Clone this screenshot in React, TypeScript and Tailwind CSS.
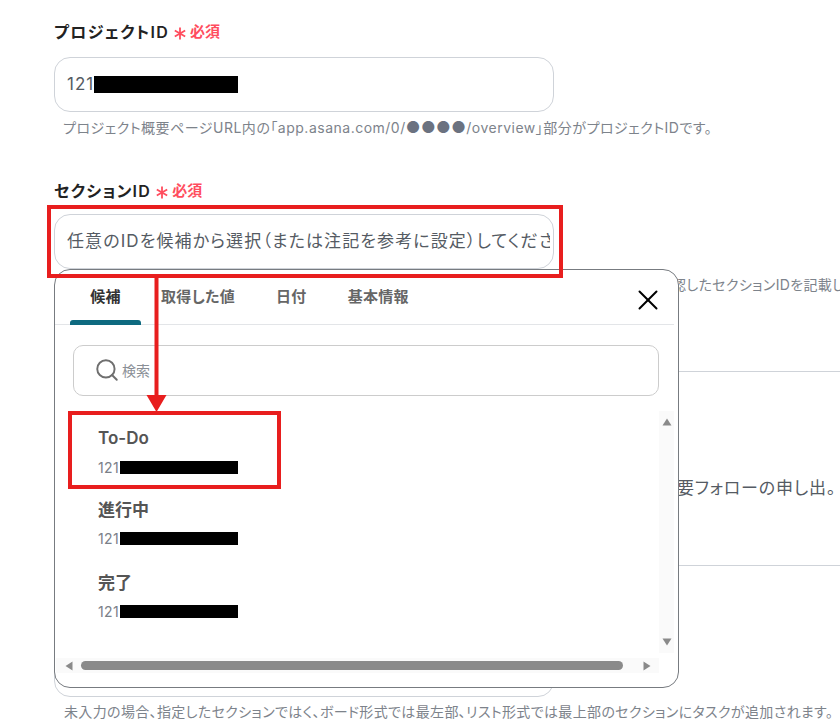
import React from 'react';
import { Search, X } from 'lucide-react';

const FONT = "font-['Inter','Noto_Sans_CJK_JP',sans-serif] [font-feature-settings:'palt']";

const ITEMS = [
  { name: 'To-Do', pt: 'pt-[30px]', idGap: 'mt-[8px]' },
  { name: '進行中', pt: 'pt-[22px]', idGap: 'mt-[7px]' },
  { name: '完了', pt: 'pt-[24px]', idGap: 'mt-[7px]' },
];

function Required() {
  return (
    <span className="ml-[5px] flex items-center text-[15px] font-bold tracking-normal text-[#ff4d5e]">
      <svg className="mr-[4px] mt-[3px]" width="12" height="13" viewBox="0 0 12 13">
        <path d="M6 0.5 V12.5 M0.8 3.5 L11.2 9.5 M11.2 3.5 L0.8 9.5" stroke="#ff4d5e" strokeWidth="1.8" fill="none" />
      </svg>
      必須
    </span>
  );
}

function Redacted({ w, h }: { w: string; h: string }) {
  return <span className={`${w} ${h} inline-block bg-black`} />;
}

function Popover() {
  return (
    <div className="absolute left-[54px] top-[269px] h-[419px] w-[625px] overflow-hidden rounded-[16px] border border-[#777b80] bg-white">
      <div className="relative flex h-[55px] w-[619px] border-b border-[#e3e5e8] pl-[15px] text-[15px] font-semibold tracking-[0.3px] text-[#666]">
        <div className="relative flex h-[54px] w-[71px] items-center justify-center font-bold text-[#333]">
          候補
          <span className="absolute bottom-[-1px] left-0 h-[5px] w-full rounded-t-[3px] bg-[#0e6a80]" />
        </div>
        <div className="ml-[20px] flex h-[54px] items-center">取得した値</div>
        <div className="ml-[41px] flex h-[54px] items-center">日付</div>
        <div className="ml-[41px] flex h-[54px] items-center">基本情報</div>
        <X className="absolute left-[576px] top-[13px] text-black" size={34} strokeWidth={1.4} />
      </div>
      <div className="ml-[18px] mt-[20px] flex h-[51px] w-[586px] items-center rounded-[10px] border border-[#cccccc] pb-[1px] pl-[20px]">
        <Search className="text-[#6f6f6f]" size={26} strokeWidth={1.8} />
        <span className="ml-[2px] text-[14px] text-[#8a8f96]">検索</span>
      </div>
      <div className="flex h-[262px]">
        <div className="w-[604px] pl-[43px]">
          {ITEMS.map((item) => (
            <div key={item.name} className={`${item.pt} flex flex-col`}>
              <span className="h-[24px] text-[17px] font-semibold leading-[24px] text-[#555]">{item.name}</span>
              <span className={`${item.idGap} flex h-[18px] items-center text-[14px] tracking-[0.4px] text-[#7b8088]`}>
                121
                <Redacted w="w-[118px] ml-[1px]" h="h-[13px]" />
              </span>
            </div>
          ))}
        </div>
        <div className="mt-[15px] flex h-[242px] w-[15px] flex-col items-center justify-between bg-[#fafafa] py-[7px]">
          <svg width="10" height="8" viewBox="0 0 10 8"><path d="M5 0.5 L9.5 7.5 H0.5 Z" fill="#8a8a8a" /></svg>
          <svg width="10" height="8" viewBox="0 0 10 8"><path d="M5 7.5 L9.5 0.5 H0.5 Z" fill="#8a8a8a" /></svg>
        </div>
      </div>
      <div className="ml-[1px] flex h-[15px] w-[603px] items-center bg-[#fafafa] pl-[9px]">
        <svg width="8" height="10" viewBox="0 0 8 10"><path d="M0.5 5 L7.5 0.5 V9.5 Z" fill="#8a8a8a" /></svg>
        <span className="ml-[8px] h-[9px] w-[542px] rounded-full bg-[#8a8a8a]" />
        <svg className="ml-[20px]" width="8" height="10" viewBox="0 0 8 10"><path d="M7.5 5 L0.5 0.5 V9.5 Z" fill="#8a8a8a" /></svg>
      </div>
    </div>
  );
}

function Annotations() {
  return (
    <>
      <div className="absolute left-[47px] top-[205px] h-[73px] w-[516px] border-[4px] border-[#e81e1e]" />
      <div className="absolute left-[68px] top-[411px] h-[78px] w-[213px] border-[4px] border-[#e81e1e]" />
      <svg className="absolute left-[146px] top-[277px]" width="21" height="135" viewBox="0 0 21 135">
        <path d="M8.5 0 H12.5 V118 H20.5 L10.5 135 L0.5 118 H8.5 Z" fill="#e81e1e" />
      </svg>
    </>
  );
}

export default function App() {
  return (
    <div className={`${FONT} relative h-[725px] w-[840px] overflow-hidden bg-white`}>
      <div className="flex flex-col pl-[54px]">
        <div className="mt-[20px] flex h-[24px] items-center text-[16px] font-semibold tracking-[1.3px] text-[#222]">
          プロジェクトID
          <Required />
        </div>
        <div className="mt-[13px] flex h-[55px] w-[500px] items-center rounded-[16px] border border-[#cfd3d9] pl-[12px] text-[17px] tracking-[1px] text-[#555b63]">
          121
          <Redacted w="w-[144px]" h="h-[17px]" />
        </div>
        <p className="ml-[9px] mt-[6px] whitespace-nowrap text-[14px] leading-[18px] tracking-[0.5px] text-[#7d838b]">
          プロジェクト概要ページURL内の「app.asana.com/0/<span className="text-[16px] text-[#6b7280]">●●●●</span>/overview」部分がプロジェクトIDです。
        </p>
        <div className="mt-[42px] flex h-[24px] items-center text-[16px] font-semibold tracking-[1.3px] text-[#222]">
          セクションID
          <Required />
        </div>
        <div className="mt-[11px] flex h-[55px] w-[500px] items-center rounded-[16px] border border-[#cfd3d9] pl-[12px] text-[17px] tracking-[1.1px] text-[#555b63]">
          <div className="w-[483px] overflow-hidden whitespace-nowrap">
            任意のIDを候補から選択（または注記を参考に設定）してください
          </div>
        </div>
        <p className="ml-[618px] mt-[7px] whitespace-nowrap text-[14px] leading-[18px] tracking-[0.35px] text-[#7d838b]">
          認したセクションIDを記載してください。
        </p>
        <div className="mt-[77px] flex h-[195px] w-[900px] flex-col rounded-[16px] border border-[#cfd3d9] pl-[13px] pt-[104px] text-[17px] leading-[24px] tracking-[0.8px] text-[#555b63]">
          <span className="w-[768px] whitespace-nowrap text-right">要フォローの申し出。</span>
        </div>
        <div className="mt-[76px] h-[55px] w-[500px] rounded-[16px] border border-[#cfd3d9]" />
        <p className="ml-[10px] mt-[6px] whitespace-nowrap text-[14px] leading-[18px] tracking-[0.35px] text-[#7d838b]">
          未入力の場合、指定したセクションではく、ボード形式では最左部、リスト形式では最上部のセクションにタスクが追加されます。
        </p>
      </div>
      <Popover />
      <Annotations />
    </div>
  );
}
